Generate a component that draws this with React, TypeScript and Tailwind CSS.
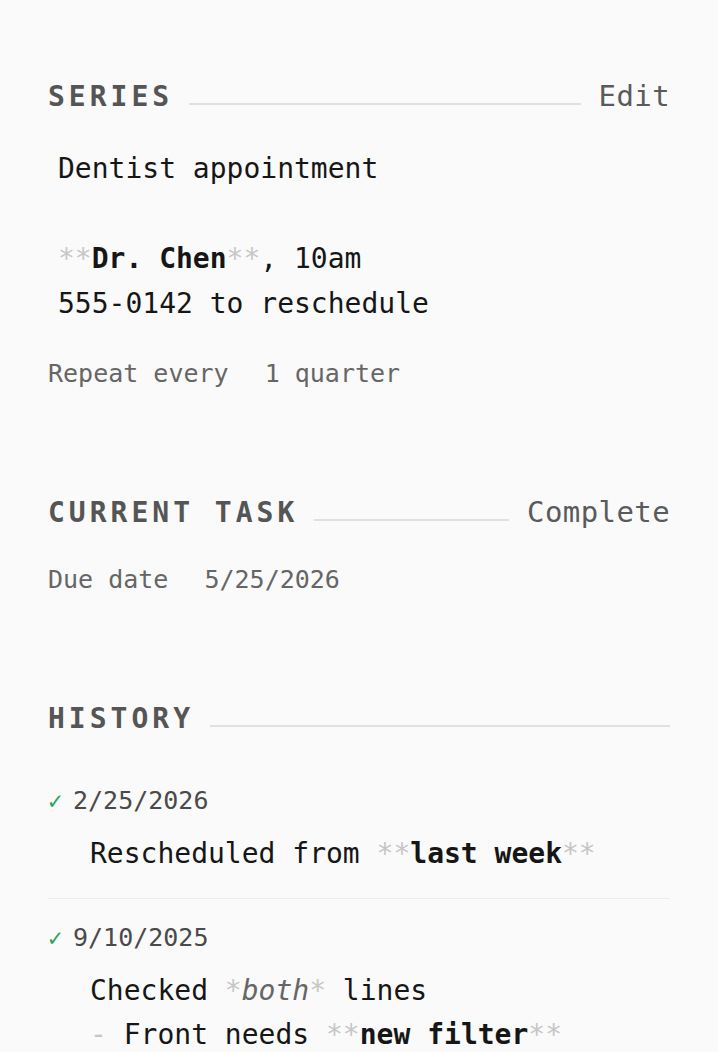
import React from 'react';

const mono = "font-['DejaVu_Sans_Mono','Liberation_Mono',monospace]";

const Dim: React.FC<{ children: React.ReactNode }> = ({ children }) => (
  <span className="text-[#c6c6c6] font-normal not-italic">{children}</span>
);

const Bold: React.FC<{ text: string }> = ({ text }) => (
  <>
    <Dim>**</Dim>
    <span className="font-bold text-[#161616]">{text}</span>
    <Dim>**</Dim>
  </>
);

const SectionHeader: React.FC<{ title: string; action?: string; className?: string }> = ({
  title,
  action,
  className = '',
}) => (
  <div className={`flex items-center h-10 ${className}`}>
    <h2 className="text-[28px] leading-10 font-bold tracking-[4px] text-[#555555] mt-[2px]">{title}</h2>
    <div className="flex-1 h-[2px] bg-[#e0e0e0] mt-4 ml-4" />
    {action && (
      <button type="button" className="ml-[18px] text-[29px] leading-10 tracking-[0.4px] text-[#5a5a5a]">
        {action}
      </button>
    )}
  </div>
);

const Meta: React.FC<{ label: string; value: string; className?: string }> = ({ label, value, className = '' }) => (
  <div className={`flex items-center gap-[36px] text-[25px] leading-9 text-[#666666] ${className}`}>
    <span>{label}</span>
    <span>{value}</span>
  </div>
);

const HistoryEntry: React.FC<{ date: string; children: React.ReactNode; last?: boolean }> = ({
  date,
  children,
  last,
}) => (
  <div className={`pt-[21px] ${last ? '' : 'pb-[22px] border-b border-[#ececec]'}`}>
    <div className="flex items-center h-9">
      <span className="text-[#2aa55e] text-[24px] w-[25px] leading-9">✓</span>
      <span className="text-[25px] text-[#4a4a4a]">{date}</span>
    </div>
    <div className="pl-[42px] mt-[13px] text-[28px] leading-[44px] text-[#161616]">{children}</div>
  </div>
);

export default function App() {
  return (
    <div className={`min-h-[1052px] bg-[#fafafa] px-12 pt-[76px] ${mono}`}>
      <SectionHeader title="SERIES" action="Edit" />
      <div className="pl-[10px] mt-[30px] text-[28px] leading-[45px] text-[#161616]">
        <div>Dentist appointment</div>
        <div>&nbsp;</div>
        <div>
          <Bold text="Dr. Chen" />, 10am
        </div>
        <div>555-0142 to reschedule</div>
      </div>
      <Meta label="Repeat every" value="1 quarter" className="mt-[30px]" />

      <SectionHeader title="CURRENT TASK" action="Complete" className="mt-[100px]" />
      <Meta label="Due date" value="5/25/2026" className="mt-[30px]" />

      <SectionHeader title="HISTORY" className="mt-[100px]" />
      <div className="mt-6">
        <HistoryEntry date="2/25/2026">
          <div>
            Rescheduled from <Bold text="last week" />
          </div>
        </HistoryEntry>
        <HistoryEntry date="9/10/2025" last>
          <div>
            Checked <Dim>*</Dim>
            <em className="text-[#666666]">both</em>
            <Dim>*</Dim> lines
          </div>
          <div>
            <Dim>-</Dim> Front needs <Bold text="new filter" />
          </div>
        </HistoryEntry>
      </div>
    </div>
  );
}
